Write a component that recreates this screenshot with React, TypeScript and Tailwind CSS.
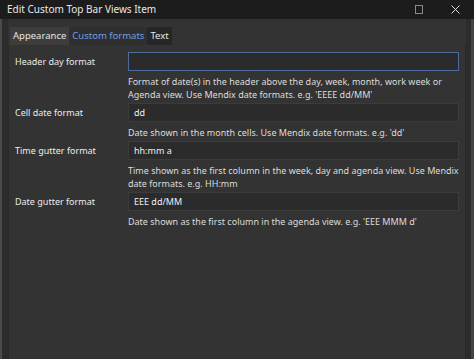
import React from "react";

const font = { fontFamily: '"Noto Sans", "Open Sans", sans-serif' };

function Row({ label, value, desc, focused }: { label: string; value: string; desc: React.ReactNode; focused?: boolean }) {
  return (
    <div className="flex">
      <div className="w-[113px] shrink-0 h-[19px] flex items-center text-[9px] text-[#ececec]">{label}</div>
      <div className="flex-1 flex flex-col">
        <div
          className={
            "h-[19px] border text-[9px] text-[#f0f0f0] px-[5px] flex items-center bg-[#2b2b2b] " +
            (focused ? "border-[#4d6b9c]" : "border-[#3b3b3b]")
          }
        >
          {value}
        </div>
        <div className="text-[9px] leading-[13px] text-[#dcdcdc] pt-[4px] pb-[2px] whitespace-nowrap">{desc}</div>
      </div>
    </div>
  );
}

export default function App() {
  return (
    <div className="w-[474px] h-[359px] bg-[#3a3a3a] flex flex-col overflow-hidden" style={font}>
      <div className="h-[19px] bg-[#1c1c1c] flex items-center shrink-0">
        <div className="pl-[7px] text-[10px] text-[#e8e8e8] flex-1">Edit Custom Top Bar Views Item</div>
        <div className="w-[8px] h-[9px] border border-[#8a8a8a] mr-[28px]" />
        <svg width="9" height="9" viewBox="0 0 9 9" className="mr-[14px]">
          <path d="M0.5 0.5 L8.5 8.5 M8.5 0.5 L0.5 8.5" stroke="#e0e0e0" strokeWidth="1" />
        </svg>
      </div>
      <div className="flex-1 flex bg-[#333333]">
        <div className="w-[2px] bg-[#4a4a4a]" />
        <div className="w-[6px] bg-[#2c2c2c]" />
        <div className="flex-1 flex flex-col">
          <div className="flex pt-[8px] pl-[2px] h-[26px] bg-[#333333]">
            <div className="px-[3px] h-[18px] flex items-center text-[9.5px] text-[#e6e6e6] bg-[#3d3d3d]">Appearance</div>
            <div className="px-[3px] h-[18px] flex items-center text-[9.5px] text-[#6f9ee0] bg-[#2f2f2f]">Custom formats</div>
            <div className="px-[3px] h-[18px] flex items-center text-[9.5px] text-[#e6e6e6] bg-[#262626]">Text</div>
          </div>
          <div className="flex-1 border-l border-r border-[#2a2a2a] bg-[#333333] pl-[6px] pr-[6px] pt-[7px] flex flex-col">
            <Row
              label="Header day format"
              value=""
              focused
              desc={<>Format of date(s) in the header above the day, week, month, work week or<br />Agenda view. Use Mendix date formats. e.g. 'EEEE dd/MM'</>}
            />
            <Row label="Cell date format" value="dd" desc="Date shown in the month cells. Use Mendix date formats. e.g. 'dd'" />
            <Row
              label="Time gutter format"
              value="hh:mm a"
              desc={<>Time shown as the first column in the week, day and agenda view. Use Mendix<br />date formats. e.g. HH:mm</>}
            />
            <Row label="Date gutter format" value="EEE dd/MM" desc="Date shown as the first column in the agenda view. e.g. 'EEE MMM d'" />
          </div>
        </div>
        <div className="w-[5px] bg-[#2c2c2c]" />
        <div className="w-[3px] bg-[#444444]" />
      </div>
    </div>
  );
}
